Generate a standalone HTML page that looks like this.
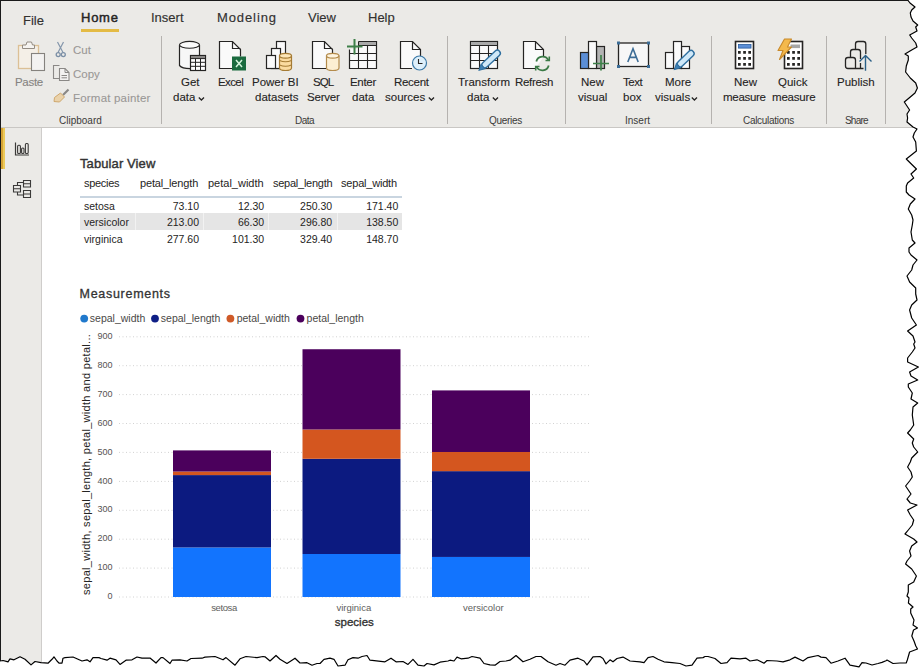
<!DOCTYPE html>
<html><head><meta charset="utf-8">
<style>
*{margin:0;padding:0;box-sizing:border-box}
html,body{width:922px;height:671px;overflow:hidden;background:#fff}
body{position:relative;font-family:"Liberation Sans",sans-serif;color:#252423}
.a{position:absolute;white-space:nowrap;line-height:1}
#ribbon{position:absolute;left:0;top:0;width:922px;height:127px;background:#ebeae7}
#rbline{position:absolute;left:0;top:127px;width:922px;height:1px;background:#c9c7c4}
#side{position:absolute;left:0;top:128px;width:42px;height:543px;background:#ebeae7;border-right:1px solid #cfcdcb}
#topb{position:absolute;left:0;top:0;width:922px;height:1px;background:#1a1a1a}
#leftb{position:absolute;left:0;top:0;width:1px;height:671px;background:#1a1a1a}
.tab{font-size:13px;color:#323130;-webkit-text-stroke:0.15px #323130}
.lbl{font-size:11.5px;color:#252423;-webkit-text-stroke:0.1px #252423}
.dis{color:#9a9896;-webkit-text-stroke:0.1px #9a9896}
.grp{font-size:10px;color:#3b3a39}
.div{position:absolute;top:36px;width:1px;height:88px;background:#b5b2af}
.tbl{font-size:11px;color:#252423}
.edge{position:absolute;left:0;top:0}
.tv{font-size:10.5px;color:#252423}
.yl{font-size:9px;color:#555351}
.lg{font-size:10.5px;color:#4a4846}
.xl{font-size:9.5px;color:#605e5c}
</style></head><body>
<div id="ribbon"></div>
<div id="rbline"></div>
<div id="side"></div>
<div style="position:absolute;left:1px;top:128px;width:2px;height:41px;background:#d6a436"></div><div style="position:absolute;left:3px;top:128px;width:2px;height:41px;background:#ecca5a"></div>
<div id="topb"></div><div id="leftb"></div>
<!-- tabs -->
<div class="a tab" style="left:23px;top:14px">File</div>
<div class="a tab" style="left:81px;top:11px;color:#252423;-webkit-text-stroke:0.45px #252423;letter-spacing:0.75px">Home</div>
<div style="position:absolute;left:81px;top:29px;width:38px;height:3px;background:#e4bb45"></div>
<div class="a tab" style="left:151px;top:11px">Insert</div>
<div class="a tab" style="left:217px;top:11px;letter-spacing:0.9px">Modeling</div>
<div class="a tab" style="left:308px;top:11px">View</div>
<div class="a tab" style="left:368px;top:11px">Help</div>
<!-- dividers -->
<div class="div" style="left:161px"></div>
<div class="div" style="left:447px"></div>
<div class="div" style="left:565px"></div>
<div class="div" style="left:711px"></div>
<div class="div" style="left:826px"></div>
<div class="div" style="left:885px"></div>
<!-- labels -->
<div class="a lbl dis" style="left:15px;top:76.5px;letter-spacing:-0.3px;color:#858381;-webkit-text-stroke:0.1px #858381">Paste</div>
<div class="a lbl dis" style="left:73px;top:44.5px">Cut</div>
<div class="a lbl dis" style="left:73px;top:69px">Copy</div>
<div class="a lbl dis" style="left:73px;top:93px;letter-spacing:0.2px">Format painter</div>
<div class="a grp" style="left:59px;top:116px">Clipboard</div>

<div class="a lbl" style="left:181px;top:77px">Get</div>
<div class="a lbl" style="left:173px;top:92px">data</div>
<div class="a lbl" style="left:218px;top:77px;letter-spacing:-0.6px">Excel</div>
<div class="a lbl" style="left:252px;top:77px">Power BI</div>
<div class="a lbl" style="left:255px;top:92px">datasets</div>
<div class="a grp" style="left:295px;top:116px;letter-spacing:-0.5px">Data</div>
<div class="a lbl" style="left:313px;top:77px;letter-spacing:-0.9px">SQL</div>
<div class="a lbl" style="left:307px;top:92px;letter-spacing:-0.2px">Server</div>
<div class="a lbl" style="left:350px;top:77px;letter-spacing:-0.3px">Enter</div>
<div class="a lbl" style="left:352px;top:92px">data</div>
<div class="a lbl" style="left:394px;top:77px;letter-spacing:-0.3px">Recent</div>
<div class="a lbl" style="left:385px;top:92px">sources</div>

<div class="a lbl" style="left:458px;top:77px">Transform</div>
<div class="a lbl" style="left:467px;top:92px">data</div>
<div class="a lbl" style="left:515px;top:77px;letter-spacing:-0.3px">Refresh</div>
<div class="a grp" style="left:489px;top:116px;letter-spacing:-0.3px">Queries</div>

<div class="a lbl" style="left:581px;top:77px">New</div>
<div class="a lbl" style="left:578px;top:92px">visual</div>
<div class="a lbl" style="left:623px;top:77px;letter-spacing:-0.5px">Text</div>
<div class="a lbl" style="left:623px;top:92px">box</div>
<div class="a lbl" style="left:665px;top:77px">More</div>
<div class="a lbl" style="left:655px;top:92px">visuals</div>
<div class="a grp" style="left:625px;top:116px">Insert</div>

<div class="a lbl" style="left:734px;top:77px">New</div>
<div class="a lbl" style="left:723px;top:92px;letter-spacing:-0.3px">measure</div>
<div class="a lbl" style="left:778px;top:77px">Quick</div>
<div class="a lbl" style="left:772px;top:92px;letter-spacing:-0.2px">measure</div>
<div class="a grp" style="left:743px;top:116px;letter-spacing:-0.3px">Calculations</div>
<div class="a lbl" style="left:837px;top:77px">Publish</div>
<div class="a grp" style="left:845px;top:116px;letter-spacing:-0.8px">Share</div>

<!-- table -->
<div class="a" style="left:80px;top:156.5px;font-size:13px;color:#333;-webkit-text-stroke:0.4px #333;letter-spacing:0.1px">Tabular View</div>
<div class="a tbl" style="left:84px;top:178px;letter-spacing:-0.3px">species</div>
<div class="a tbl" style="left:140px;top:178px;letter-spacing:-0.15px">petal_length</div>
<div class="a tbl" style="left:208px;top:178px">petal_width</div>
<div class="a tbl" style="left:273px;top:178px;letter-spacing:-0.25px">sepal_length</div>
<div class="a tbl" style="left:341px;top:178px;letter-spacing:-0.2px">sepal_width</div>
<div style="position:absolute;left:80px;top:196px;width:322px;height:2px;background:#c9d5e0"></div>
<div style="position:absolute;left:80px;top:213px;width:322px;height:16.5px;background:#e5e5e5"></div>
<div style="position:absolute;left:135px;top:213px;width:1px;height:17px;background:#f2f2f2"></div><div style="position:absolute;left:203px;top:213px;width:1px;height:17px;background:#f2f2f2"></div><div style="position:absolute;left:268px;top:213px;width:1px;height:17px;background:#f2f2f2"></div><div style="position:absolute;left:337px;top:213px;width:1px;height:17px;background:#f2f2f2"></div>

<svg class="edge" width="922" height="210" viewBox="0 0 922 210" style="position:absolute;left:0;top:0">
<g fill="none" stroke-linejoin="miter">
<!-- Paste -->
<rect x="18.5" y="45.5" width="20" height="23" fill="#f4efe7" stroke="#dcc096" stroke-width="1.3"/>
<path d="M22.5,48.5 V45 H26 L27,42 H31.5 L32.5,45 H34.5 V48.5 Z" fill="#f6f4f1" stroke="#948d84" stroke-width="1"/>
<rect x="31.5" y="53.5" width="13" height="17" fill="#f3f2f1" stroke="#85827e" stroke-width="1.1"/>
<!-- Cut -->
<path d="M57.5,42 L63,52.5 M63.5,42 L58,52.5" stroke="#8496ab" stroke-width="1.2"/>
<circle cx="58.2" cy="54.6" r="2" stroke="#7b8fa6" stroke-width="1.3"/>
<circle cx="63.3" cy="54.6" r="2" stroke="#7b8fa6" stroke-width="1.3"/>
<!-- Copy -->
<path d="M59.5,65.5 H53.5 V78.5 H59.5" stroke="#8a8886" stroke-width="1.1"/>
<path d="M59.5,68.5 H65 L69,72.5 V80.5 H59.5 Z" fill="#f3f2f1" stroke="#8a8886" stroke-width="1.1"/>
<path d="M65,68.5 V72.5 H69 M61.5,75.5 H67 M61.5,77.8 H67" stroke="#8a8886" stroke-width="1"/>
<!-- Format painter -->
<path d="M68.5,89.5 L63,95" stroke="#8a8886" stroke-width="2.2"/>
<path d="M54.5,97.5 L60.5,93 L64.5,97 L59.5,102 L54,101.5 Z" fill="#ead2aa" stroke="#cfa86e" stroke-width="1"/>
<!-- Get data -->
<path d="M179.5,45 V65.5 Q182,68.6 190,68.6 H190.5 V55.5 H199.5 V45" fill="#f7f7f7" stroke="none"/>
<path d="M179.5,45 V65.5 Q182,68.6 190,68.6 M199.5,45 V55" stroke="#252423" stroke-width="1.2"/>
<ellipse cx="189.5" cy="44.8" rx="10" ry="3.4" fill="#fafafa" stroke="#252423" stroke-width="1.1"/>
<rect x="190.5" y="55.5" width="15" height="15" fill="#fff" stroke="#252423" stroke-width="1.2"/>
<rect x="191" y="56" width="14" height="2.6" fill="#8a8886"/>
<path d="M195.5,58.5 V70.5 M200.5,58.5 V70.5 M190.5,62.3 H205.5 M190.5,66.3 H205.5 M190.5,58.6 H205.5" stroke="#252423" stroke-width="1"/>
<!-- Excel -->
<path d="M232,68.5 H219.5 V41.5 H232.5 L240.5,49.5 V56.5 Z" fill="#fafafa" stroke="none"/>
<path d="M232,68.5 H219.5 V41.5 H232.5 L240.5,49.5 V56.5 M232.5,41.5 V48.5 H240.5" stroke="#252423" stroke-width="1.2"/>
<rect x="232" y="56.5" width="14" height="14" fill="#1b6b3f"/>
<path d="M236,60 L242,67 M242,60 L236,67" stroke="#d5f5dd" stroke-width="1.5"/>
<!-- Power BI datasets -->
<rect x="276.5" y="41.5" width="9" height="27" fill="#fafafa" stroke="#252423" stroke-width="1.2"/>
<rect x="271.5" y="48.5" width="9" height="20" fill="#fafafa" stroke="#252423" stroke-width="1.2"/>
<rect x="266.5" y="55.5" width="9" height="13" fill="#fafafa" stroke="#252423" stroke-width="1.2"/>
<path d="M279.5,56 V68 Q279.5,70.5 285.5,70.5 Q291.5,70.5 291.5,68 V56 Z" fill="#fbdba0" stroke="#a57b34" stroke-width="1.2"/>
<ellipse cx="285.5" cy="55.8" rx="6" ry="2.4" fill="#fde6b8" stroke="#a57b34" stroke-width="1.2"/>
<path d="M279.5,60.5 Q285.5,63 291.5,60.5 M279.5,65 Q285.5,67.5 291.5,65" stroke="#a57b34" stroke-width="1.1"/>
<!-- SQL -->
<path d="M326,68.5 H312.5 V41.5 H324.5 L332.5,49.5 V53" fill="#fafafa" stroke="none"/>
<path d="M326,68.5 H312.5 V41.5 H324.5 L332.5,49.5 V53 M324.5,41.5 V48.5 H332.5" stroke="#252423" stroke-width="1.2"/>
<path d="M326.5,56 V68 Q326.5,70.5 332.7,70.5 Q339,70.5 339,68 V56 Z" fill="#fcefd3" stroke="#b48c4c" stroke-width="1.2"/>
<ellipse cx="332.7" cy="55.8" rx="6.2" ry="2.4" fill="#fdf3de" stroke="#b48c4c" stroke-width="1.2"/>
<!-- Enter data -->
<path d="M349.5,41.5 H376.5 V68.5 H349.5 Z" fill="#fafafa" stroke="none"/><path d="M358.5,41.5 H376.5 V68.5 H349.5 V49.5" stroke="#252423" stroke-width="1.2"/>
<rect x="358" y="42" width="18" height="3.6" fill="#a9a9a9"/>
<path d="M358.5,41.5 V68.5 M367.5,45.5 V68.5 M349.5,53.5 H376.5 M349.5,60.5 H376.5 M358.5,45.5 H376.5" stroke="#252423" stroke-width="1.1"/>
<rect x="349" y="41" width="9" height="8" fill="#ebeae7" stroke="none"/>
<path d="M347,46.5 H362.5 M354.5,39 V54.5" stroke="#3e8049" stroke-width="2"/>
<!-- Recent -->
<path d="M412,68.5 H400.5 V41.5 H412 L420.5,49.5 V56" fill="#fafafa" stroke="none"/>
<path d="M412,68.5 H400.5 V41.5 H412.5 L420.5,49.5 V56 M412.5,41.5 V49.5 H420.5" stroke="#252423" stroke-width="1.2"/>
<circle cx="419.5" cy="63" r="7" fill="#ddeffa" stroke="#3a78a6" stroke-width="1.2"/>
<path d="M418.5,59 V63.5 H422.5" stroke="#252423" stroke-width="1.1"/>
<!-- Transform -->
<rect x="470.5" y="41.5" width="27" height="27" fill="#fafafa" stroke="#252423" stroke-width="1.2"/>
<rect x="471" y="42" width="26" height="3.6" fill="#a9a9a9"/>
<path d="M479.5,45.5 V68.5 M488.5,45.5 V68.5 M470.5,53.5 H497.5 M470.5,60.5 H497.5 M470.5,45.5 H497.5" stroke="#252423" stroke-width="1.1"/>
<g transform="translate(479,70.3) rotate(-43)">
<rect x="5" y="-3" width="23" height="6" rx="3" fill="#cfe8f8" stroke="#2f6f9f" stroke-width="1.4"/>
<path d="M0,0 L5.5,-3 L5.5,3 Z" fill="#3d7fb5" stroke="#2f6f9f" stroke-width="1"/>
</g>
<!-- Refresh -->
<path d="M535,68.5 H523.5 V41.5 H535 L543.5,49.5 V57" fill="#fafafa" stroke="none"/>
<path d="M535,68.5 H523.5 V41.5 H535.5 L543.5,49.5 V57 M535.5,41.5 V49.5 H543.5" stroke="#252423" stroke-width="1.2"/>
<path d="M536.3,61.5 A6.5,6.5 0 0 1 548.5,60.5 M548.7,65.5 A6.5,6.5 0 0 1 536.5,66.5" stroke="#3b7a46" stroke-width="1.8"/>
<path d="M545.5,60.5 H549.3 V56.5 M539.5,66.5 H535.7 V70.5" stroke="#3b7a46" stroke-width="1.6"/>
<!-- New visual -->
<rect x="596.5" y="46.5" width="8" height="22" fill="#b3b3b3" stroke="#252423" stroke-width="1.2"/>
<rect x="588.5" y="41.5" width="8" height="27" fill="#fafafa" stroke="#252423" stroke-width="1.2"/>
<rect x="580.5" y="52.5" width="8" height="16" fill="#5b8ed6" stroke="#252423" stroke-width="1.2"/>
<path d="M593,63.5 H609 M601,55 V70.5" stroke="#3e8049" stroke-width="1.7"/>
<!-- Text box -->
<rect x="618.5" y="43" width="30" height="23.5" fill="#f7f7f7" stroke="#252423" stroke-width="1.3"/>
<path d="M617,41.5 h3v3h-3z M647,41.5 h3v3h-3z M617,65 h3v3h-3z M647,65 h3v3h-3z" fill="#3d6d96"/>
<path d="M627.8,62 L633,48.8 L638.2,62 M629.6,57.4 H636.4" stroke="#3d6d96" stroke-width="1.6"/>
<!-- More visuals -->
<rect x="681.5" y="46.5" width="8" height="22" fill="#fafafa" stroke="#252423" stroke-width="1.2"/>
<rect x="673.5" y="41.5" width="8" height="27" fill="#fafafa" stroke="#252423" stroke-width="1.2"/>
<rect x="665.5" y="52.5" width="8" height="16" fill="#fafafa" stroke="#252423" stroke-width="1.2"/>
<g transform="translate(674.5,69.5) rotate(-44)">
<rect x="5" y="-3" width="21" height="6" rx="3" fill="#cfe8f8" stroke="#2f6f9f" stroke-width="1.4"/>
<path d="M0,0 L5.5,-3 L5.5,3 Z" fill="#3d7fb5" stroke="#2f6f9f" stroke-width="1"/>
</g>
<!-- New measure -->
<rect x="735.5" y="41.5" width="18" height="27" fill="#fff" stroke="#252423" stroke-width="1.6"/>
<rect x="738.5" y="44.5" width="12.5" height="3.6" fill="#5b8ed6" stroke="#2a5d9e" stroke-width="0.8"/>
<path d="M738,51h2.7v2.7h-2.7z M743.2,51h2.7v2.7h-2.7z M748.3,51h2.7v2.7h-2.7z M738,57h2.7v2.7h-2.7z M743.2,57h2.7v2.7h-2.7z M748.3,57h2.7v2.7h-2.7z M738,63.1h2.7v2.7h-2.7z M743.2,63.1h2.7v2.7h-2.7z M748.3,63.1h2.7v2.7h-2.7z" fill="#252423"/>
<!-- Quick measure -->
<rect x="784.5" y="41.5" width="18" height="27" fill="#fff" stroke="#252423" stroke-width="1.6"/>
<rect x="790.5" y="44.5" width="9.5" height="3.6" fill="#a6a6a6"/>
<path d="M787,51h2.7v2.7h-2.7z M792.2,51h2.7v2.7h-2.7z M797.3,51h2.7v2.7h-2.7z M787,57h2.7v2.7h-2.7z M792.2,57h2.7v2.7h-2.7z M797.3,57h2.7v2.7h-2.7z M787,63.1h2.7v2.7h-2.7z M792.2,63.1h2.7v2.7h-2.7z M797.3,63.1h2.7v2.7h-2.7z" fill="#252423"/>
<path d="M784.5,39 H791.5 L787.5,47 H791.5 L779.5,59.5 L783,50.5 H778 Z" fill="#f4b94c" stroke="#c8892a" stroke-width="1.1" stroke-linejoin="round"/>
<!-- Publish -->
<path d="M855.5,49.5 V44 Q855.5,41.5 858,41.5 H863.3 Q865.8,41.5 865.8,44 V54" stroke="#252423" stroke-width="1.3"/>
<path d="M850.5,57.5 V52 Q850.5,49.5 853,49.5 H858 Q860.5,49.5 860.5,52 V59 M860.5,63 V68.5" stroke="#252423" stroke-width="1.3"/>
<path d="M845.5,60 Q845.5,57.5 848,57.5 H853 Q855.5,57.5 855.5,60 V68.5 H848 Q845.5,68.5 845.5,66 Z M855.5,68.5 H863.5" stroke="#252423" stroke-width="1.3"/>
<path d="M865.5,70.8 V56 M859.5,61.5 L865.5,55.6 L871.5,61.5" stroke="#2a5f86" stroke-width="1.4"/>
<!-- chevrons -->
<path d="M198.8,97.5 L201.4,100 L204,97.5" stroke="#252423" stroke-width="1.3"/>
<path d="M428.8,97.5 L431.4,100 L434,97.5" stroke="#252423" stroke-width="1.3"/>
<path d="M492.8,97.5 L495.4,100 L498,97.5" stroke="#252423" stroke-width="1.3"/>
<path d="M691.8,97.5 L694.4,100 L697,97.5" stroke="#252423" stroke-width="1.3"/>
<!-- sidebar -->
<path d="M15.5,142.5 V155 H29" stroke="#3b3a39" stroke-width="1.2"/>
<rect x="17.6" y="145.2" width="2.8" height="8.3" rx="1" stroke="#3b3a39" stroke-width="1.1"/>
<rect x="21.6" y="148" width="2.4" height="5.5" rx="1" stroke="#3b3a39" stroke-width="1.1"/>
<rect x="25.4" y="143.5" width="2.8" height="10" rx="1" stroke="#3b3a39" stroke-width="1.1"/>
<path d="M13.5,185.5 h7v6.5h-7z M13.5,188.7 h7 M23.5,180.5 h7v6.5h-7z M23.5,183.7 h7 M23.5,190.5 h7v7h-7z M23.5,194 h7 M17.5,185.5 V182.5 H23.5 M17.5,192 V195 H23.5" stroke="#3b3a39" stroke-width="1.1"/>
</g>
</svg>

<div class="a tv" style="left:84px;top:201.1px">setosa</div>
<div class="a tv" style="right:723.0px;top:201.1px">73.10</div>
<div class="a tv" style="right:657.8px;top:201.1px">12.30</div>
<div class="a tv" style="right:589.8px;top:201.1px">250.30</div>
<div class="a tv" style="right:523.7px;top:201.1px">171.40</div>
<div class="a tv" style="left:84px;top:216.8px">versicolor</div>
<div class="a tv" style="right:723.0px;top:216.8px">213.00</div>
<div class="a tv" style="right:657.8px;top:216.8px">66.30</div>
<div class="a tv" style="right:589.8px;top:216.8px">296.80</div>
<div class="a tv" style="right:523.7px;top:216.8px">138.50</div>
<div class="a tv" style="left:84px;top:233.7px">virginica</div>
<div class="a tv" style="right:723.0px;top:233.7px">277.60</div>
<div class="a tv" style="right:657.8px;top:233.7px">101.30</div>
<div class="a tv" style="right:589.8px;top:233.7px">329.40</div>
<div class="a tv" style="right:523.7px;top:233.7px">148.70</div>
<svg class="edge" width="922" height="671" viewBox="0 0 922 671" style="position:absolute;left:0;top:0">
<line x1="119" y1="597.0" x2="591" y2="597.0" stroke="#d2d2d2" stroke-width="1" stroke-dasharray="1 2.5"/>
<line x1="119" y1="568.1" x2="591" y2="568.1" stroke="#d2d2d2" stroke-width="1" stroke-dasharray="1 2.5"/>
<line x1="119" y1="539.2" x2="591" y2="539.2" stroke="#d2d2d2" stroke-width="1" stroke-dasharray="1 2.5"/>
<line x1="119" y1="510.3" x2="591" y2="510.3" stroke="#d2d2d2" stroke-width="1" stroke-dasharray="1 2.5"/>
<line x1="119" y1="481.4" x2="591" y2="481.4" stroke="#d2d2d2" stroke-width="1" stroke-dasharray="1 2.5"/>
<line x1="119" y1="452.4" x2="591" y2="452.4" stroke="#d2d2d2" stroke-width="1" stroke-dasharray="1 2.5"/>
<line x1="119" y1="423.5" x2="591" y2="423.5" stroke="#d2d2d2" stroke-width="1" stroke-dasharray="1 2.5"/>
<line x1="119" y1="394.6" x2="591" y2="394.6" stroke="#d2d2d2" stroke-width="1" stroke-dasharray="1 2.5"/>
<line x1="119" y1="365.7" x2="591" y2="365.7" stroke="#d2d2d2" stroke-width="1" stroke-dasharray="1 2.5"/>
<line x1="119" y1="336.8" x2="591" y2="336.8" stroke="#d2d2d2" stroke-width="1" stroke-dasharray="1 2.5"/>
<rect x="173.0" y="547.45" width="98" height="49.55" fill="#1274fe"/>
<rect x="173.0" y="475.09" width="98" height="72.36" fill="#0c1a80"/>
<rect x="173.0" y="471.53" width="98" height="3.56" fill="#d4561f"/>
<rect x="173.0" y="450.40" width="98" height="21.13" fill="#4b005c"/>
<rect x="302.5" y="554.01" width="98" height="42.99" fill="#1274fe"/>
<rect x="302.5" y="458.78" width="98" height="95.23" fill="#0c1a80"/>
<rect x="302.5" y="429.50" width="98" height="29.29" fill="#d4561f"/>
<rect x="302.5" y="349.24" width="98" height="80.25" fill="#4b005c"/>
<rect x="432.0" y="556.96" width="98" height="40.04" fill="#1274fe"/>
<rect x="432.0" y="471.15" width="98" height="85.80" fill="#0c1a80"/>
<rect x="432.0" y="451.99" width="98" height="19.17" fill="#d4561f"/>
<rect x="432.0" y="390.41" width="98" height="61.58" fill="#4b005c"/>
<circle cx="84.2" cy="318.6" r="3.9" fill="#2079cc"/>
<circle cx="155.0" cy="318.6" r="3.9" fill="#0f1f86"/>
<circle cx="230.4" cy="318.6" r="3.9" fill="#cf5a28"/>
<circle cx="300.5" cy="318.6" r="3.9" fill="#4b005c"/>
</svg>
<div class="a yl" style="right:809.4px;top:592.1px">0</div>
<div class="a yl" style="right:809.4px;top:563.2px">100</div>
<div class="a yl" style="right:809.4px;top:534.3px">200</div>
<div class="a yl" style="right:809.4px;top:505.4px">300</div>
<div class="a yl" style="right:809.4px;top:476.5px">400</div>
<div class="a yl" style="right:809.4px;top:447.6px">500</div>
<div class="a yl" style="right:809.4px;top:418.6px">600</div>
<div class="a yl" style="right:809.4px;top:389.7px">700</div>
<div class="a yl" style="right:809.4px;top:360.8px">800</div>
<div class="a yl" style="right:809.4px;top:331.9px">900</div>
<div class="a lg" style="left:89.8px;top:312.5px">sepal_width</div>
<div class="a lg" style="left:160.8px;top:312.5px">sepal_length</div>
<div class="a lg" style="left:236.7px;top:312.5px">petal_width</div>
<div class="a lg" style="left:306.6px;top:312.5px">petal_length</div>
<div class="a" style="left:79.6px;top:288px;font-size:12.5px;color:#333;-webkit-text-stroke:0.3px #333;letter-spacing:0.7px">Measurements</div>
<div class="a xl" style="left:211.2px;top:603px;letter-spacing:-0.4px">setosa</div>
<div class="a xl" style="left:336.4px;top:603px;letter-spacing:0.0px">virginica</div>
<div class="a xl" style="left:463.0px;top:603px;letter-spacing:0.0px">versicolor</div>
<div class="a" style="left:334.8px;top:616.5px;font-size:11.5px;color:#333;-webkit-text-stroke:0.35px #333">species</div>
<div class="a" style="left:81px;top:595px;font-size:11px;color:#252423;letter-spacing:0.3px;transform:rotate(-90deg);transform-origin:0 0">sepal_width, sepal_length, petal_width and petal...</div>
<svg class="edge" width="922" height="671" viewBox="0 0 922 671"><path d="M907.6,0 L910,3 L915,7 L911.7,10 L910.3,13 L911,17 L913,21 L917.7,25 L915.7,27 L917,31 L909.7,35 L911.7,38 L915.7,43 L917,47 L911.7,50 L905,54 L908.3,56 L908.3,60 L906.3,66 L905.6,72 L910.3,78 L915.7,83 L917.4,88 L915,93 L910.3,97 L904.3,102 L906.3,105 L909.6,110 L907,114 L907.6,118 L907,122 L913,127 L917,129 L914.3,133 L913,137 L915.7,142 L916.4,151 L906.3,159 L910.3,163 L916.4,169 L911,174 L913.7,178 L907.6,183 L906.3,186 L906.3,192 L909,195 L915,199 L910.3,204 L908.3,209 L911.7,215 L913,220 L912.3,225 L911,232 L912.3,240 L915,243 L909,248 L909,252 L911,255 L917,260 L913,265 L911.7,270 L907,276 L909.6,282 L915.7,288 L915.7,294 L917,300 L911.7,305 L909.6,310 L911.7,318 L916.4,325 L907.6,331 L913,336 L915,342 L913.7,344 L915,348 L912.3,352 L907.6,358 L907.6,362 L918.4,367 L909.6,372 L911,376 L917.7,380 L908.3,384 L908.3,387 L912.3,393 L911,399 L917.7,403 L913,407 L912.3,415 L913.7,425 L910.3,430 L907.6,433 L913.7,439 L912.3,443 L913.7,447 L917.7,452 L911.7,458 L910.3,462 L907.6,467 L911,472 L912.3,477 L909.6,481 L905.6,486 L911,494 L907,499 L910.3,503 L917,505 L907.6,510 L910.3,515 L913.7,520 L912.3,525 L908.3,530 L905,534 L913.7,539 L917,542 L911.7,546 L909.6,551 L911,556 L907,561 L905.6,564 L911.7,569 L916.4,576 L913.7,582 L908.3,585 L908.3,592 L907,596 L909,598 L908.4,603 L913,607 L910.7,609 L910.7,613 L914,620 L913,625 L917.5,628 L913.5,630 L911.8,636 L914,641 L915.8,646 L917.5,649 L909.6,652 L907.3,660 L906.2,663 L900,663 L893,663.5 L887,660 L886,660.7 L882,662.4 L878,663.5 L872,665 L866,663 L862,662.7 L859,666.9 L850,665.2 L845,658.2 L838,661 L831,663.2 L826,657.6 L821,657.1 L818,655.5 L808,657.6 L803,661 L795,657.1 L790,659.8 L783,661.8 L777,661 L767,660.5 L764,663.2 L757,659.8 L750,661 L746,658.2 L740,658.8 L731,658.2 L727,662.7 L721,663.5 L715,658.5 L708,656.5 L705,656.5 L703,657.6 L697,658.2 L692,665.2 L686,666 L680,663.5 L672,662.7 L664,661.8 L658,659.3 L653,656.5 L648,657.6 L644,662.7 L640,661.8 L630,661 L623,657.1 L617,658.5 L613,661.8 L610,659.8 L606,663.9 L603,658.5 L600,656.5 L593,656.8 L587,664.9 L584,661 L578,658.2 L570,660.2 L565,665.2 L560,663.5 L556,665.2 L548,661.8 L541,656.5 L536,656.5 L530,659.3 L523,661.8 L516,655.5 L510,660.2 L506,661 L500,661.5 L495,665.2 L490,664.9 L484,663.5 L480,658.2 L472,656.5 L468,658.2 L461,658.8 L457,657.1 L454,661 L450,660.2 L448,661 L440,662.2 L434,664.9 L427,663.5 L424,666 L418,665.2 L413,659.3 L408,664.4 L403,661.5 L396,661.8 L391,658.2 L385,661.8 L370,660.2 L367,655.5 L362,656.5 L358,658.2 L353,657.6 L348,659.8 L345,665.2 L338,666 L334,659.3 L330,658.2 L324,659.3 L320,663.5 L317,663.5 L312,665.2 L307,662.7 L300,663 L295,658.2 L292,660.2 L287,663.5 L280,659.3 L276,655.5 L270,661 L265,656.8 L263,656.5 L257,657.6 L246,656.5 L240,658.8 L235,665.2 L226,657.6 L223,659.8 L215,656.5 L205,657.1 L202,658.2 L191,658.5 L187,661 L180,659.8 L172,660.2 L170,663.5 L163,657.6 L161,657.6 L156,663 L150,658 L142,658.2 L137,657 L132,659.8 L126,660.2 L120,664.4 L116,659.8 L110,658.2 L107,660.2 L101,658.5 L99,657.6 L93,657.6 L90,661.8 L87,659.8 L82,661 L73,657 L65,657.6 L63,658.2 L62,663.2 L59,663.2 L57,661 L54,656.8 L52,659.3 L48,663.2 L41,662.7 L35,661.5 L31,664.9 L25,659.3 L20,656.8 L14,659.8 L10,658.8 L8,661.8 L3,660.5 L0,661 L0,671 L922,671 L922,0 Z" fill="#fff"/><polyline points="907.6,0 910,3 915,7 911.7,10 910.3,13 911,17 913,21 917.7,25 915.7,27 917,31 909.7,35 911.7,38 915.7,43 917,47 911.7,50 905,54 908.3,56 908.3,60 906.3,66 905.6,72 910.3,78 915.7,83 917.4,88 915,93 910.3,97 904.3,102 906.3,105 909.6,110 907,114 907.6,118 907,122 913,127 917,129 914.3,133 913,137 915.7,142 916.4,151 906.3,159 910.3,163 916.4,169 911,174 913.7,178 907.6,183 906.3,186 906.3,192 909,195 915,199 910.3,204 908.3,209 911.7,215 913,220 912.3,225 911,232 912.3,240 915,243 909,248 909,252 911,255 917,260 913,265 911.7,270 907,276 909.6,282 915.7,288 915.7,294 917,300 911.7,305 909.6,310 911.7,318 916.4,325 907.6,331 913,336 915,342 913.7,344 915,348 912.3,352 907.6,358 907.6,362 918.4,367 909.6,372 911,376 917.7,380 908.3,384 908.3,387 912.3,393 911,399 917.7,403 913,407 912.3,415 913.7,425 910.3,430 907.6,433 913.7,439 912.3,443 913.7,447 917.7,452 911.7,458 910.3,462 907.6,467 911,472 912.3,477 909.6,481 905.6,486 911,494 907,499 910.3,503 917,505 907.6,510 910.3,515 913.7,520 912.3,525 908.3,530 905,534 913.7,539 917,542 911.7,546 909.6,551 911,556 907,561 905.6,564 911.7,569 916.4,576 913.7,582 908.3,585 908.3,592 907,596 909,598 908.4,603 913,607 910.7,609 910.7,613 914,620 913,625 917.5,628 913.5,630 911.8,636 914,641 915.8,646 917.5,649 909.6,652 907.3,660 906.2,663 900,663 893,663.5 887,660 886,660.7 882,662.4 878,663.5 872,665 866,663 862,662.7 859,666.9 850,665.2 845,658.2 838,661 831,663.2 826,657.6 821,657.1 818,655.5 808,657.6 803,661 795,657.1 790,659.8 783,661.8 777,661 767,660.5 764,663.2 757,659.8 750,661 746,658.2 740,658.8 731,658.2 727,662.7 721,663.5 715,658.5 708,656.5 705,656.5 703,657.6 697,658.2 692,665.2 686,666 680,663.5 672,662.7 664,661.8 658,659.3 653,656.5 648,657.6 644,662.7 640,661.8 630,661 623,657.1 617,658.5 613,661.8 610,659.8 606,663.9 603,658.5 600,656.5 593,656.8 587,664.9 584,661 578,658.2 570,660.2 565,665.2 560,663.5 556,665.2 548,661.8 541,656.5 536,656.5 530,659.3 523,661.8 516,655.5 510,660.2 506,661 500,661.5 495,665.2 490,664.9 484,663.5 480,658.2 472,656.5 468,658.2 461,658.8 457,657.1 454,661 450,660.2 448,661 440,662.2 434,664.9 427,663.5 424,666 418,665.2 413,659.3 408,664.4 403,661.5 396,661.8 391,658.2 385,661.8 370,660.2 367,655.5 362,656.5 358,658.2 353,657.6 348,659.8 345,665.2 338,666 334,659.3 330,658.2 324,659.3 320,663.5 317,663.5 312,665.2 307,662.7 300,663 295,658.2 292,660.2 287,663.5 280,659.3 276,655.5 270,661 265,656.8 263,656.5 257,657.6 246,656.5 240,658.8 235,665.2 226,657.6 223,659.8 215,656.5 205,657.1 202,658.2 191,658.5 187,661 180,659.8 172,660.2 170,663.5 163,657.6 161,657.6 156,663 150,658 142,658.2 137,657 132,659.8 126,660.2 120,664.4 116,659.8 110,658.2 107,660.2 101,658.5 99,657.6 93,657.6 90,661.8 87,659.8 82,661 73,657 65,657.6 63,658.2 62,663.2 59,663.2 57,661 54,656.8 52,659.3 48,663.2 41,662.7 35,661.5 31,664.9 25,659.3 20,656.8 14,659.8 10,658.8 8,661.8 3,660.5 0,661" fill="none" stroke="#000" stroke-width="1.2" stroke-linejoin="round"/></svg>
</body></html>
